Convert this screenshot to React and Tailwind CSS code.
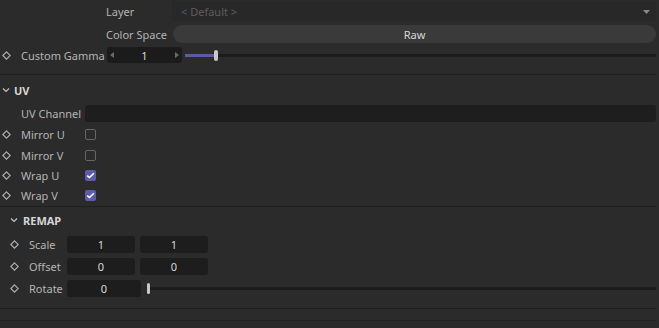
import React from "react";

const font = { fontFamily: '"Noto Sans", "Open Sans", sans-serif' };

function Diamond() {
  return (
    <svg width="9" height="9" viewBox="0 0 9 9" className="shrink-0">
      <path d="M4.5 0.8 L8.2 4.5 L4.5 8.2 L0.8 4.5 Z" fill="none" stroke="#b0b0b0" strokeWidth="1.1" />
    </svg>
  );
}

function Chevron() {
  return (
    <svg width="8" height="6" viewBox="0 0 8 6" className="shrink-0">
      <path d="M1 1.5 L4 4.5 L7 1.5" fill="none" stroke="#c8c8c8" strokeWidth="1.1" />
    </svg>
  );
}

function Checkbox({ checked }) {
  if (checked) {
    return (
      <div className="w-[11px] h-[11px] rounded-[2px] bg-[#5c5caa] flex items-center justify-center">
        <svg width="9" height="7" viewBox="0 0 9 7">
          <path d="M1.2 3.6 L3.5 5.6 L7.8 1.3" fill="none" stroke="#ffffff" strokeWidth="1.5" />
        </svg>
      </div>
    );
  }
  return <div className="w-[11px] h-[11px] rounded-[2px] border border-[#666666] bg-[#2b2b2b]" />;
}

function CheckRow({ label, checked, cls = "" }) {
  return (
    <div className={"flex items-center h-[20px] " + cls}>
      <div className="w-[21px] pl-[2px] flex items-center"><Diamond /></div>
      <div className="w-[64px] text-[#b4b4b4]">{label}</div>
      <Checkbox checked={checked} />
    </div>
  );
}

function NumField({ value, w }) {
  return (
    <div className={"h-[17px] rounded-[3px] bg-[#1d1d1d] flex items-center justify-center text-[#d8d8d8] " + w}>
      {value}
    </div>
  );
}

export default function App() {
  return (
    <div className="w-[659px] h-[328px] bg-[#2b2b2b] text-[11px] leading-none overflow-hidden" style={font}>
      <div className="w-[656px] pt-[1px]">
        {/* Layer */}
        <div className="flex items-center h-[21px]">
          <div className="w-[172px] pl-[106px] text-[#b4b4b4]">Layer</div>
          <div className="flex-1 h-[21px] rounded-[3px] bg-[#282828] flex items-center pl-[9px] pr-[6px] text-[#5c5c5c]">
            <span className="flex-1">&lt; Default &gt;</span>
            <svg width="7" height="4" viewBox="0 0 7 4"><path d="M0 0 L7 0 L3.5 4 Z" fill="#8a8a8a" /></svg>
          </div>
        </div>
        {/* Color space */}
        <div className="flex items-center h-[18px] mt-[3px]">
          <div className="w-[173px] pl-[106px] text-[#b4b4b4] whitespace-nowrap">Color Space</div>
          <div className="flex-1 h-[18px] rounded-full bg-[#3a3a3a] flex items-center justify-center text-[#d8d8d8]">Raw</div>
        </div>
        {/* Custom Gamma */}
        <div className="flex items-center h-[16px] mt-[4px]">
          <div className="w-[21px] pl-[2px] flex items-center"><Diamond /></div>
          <div className="w-[86px] text-[#b4b4b4] whitespace-nowrap">Custom Gamma</div>
          <div className="w-[75px] h-[16px] rounded-[3px] bg-[#1b1b1b] flex items-center justify-between px-[3px] text-[#d8d8d8]">
            <svg width="4" height="6" viewBox="0 0 4 6"><path d="M4 0 L0 3 L4 6 Z" fill="#6a6a6a" /></svg>
            <span>1</span>
            <svg width="4" height="6" viewBox="0 0 4 6"><path d="M0 0 L4 3 L0 6 Z" fill="#6a6a6a" /></svg>
          </div>
          <div className="flex-1 flex items-center ml-[3px] h-[12px]">
            <div className="w-[29px] h-[3px] bg-[#5a5aa6]" />
            <div className="w-[4px] h-[11px] rounded-[2px] bg-[#c8c8c8]" />
            <div className="flex-1 h-[3px] bg-[#1c1c1c]" />
          </div>
        </div>
        <div className="h-[11px]" />
        <div className="h-[1px] bg-[#1f1f1f]" />
        {/* UV header */}
        <div className="flex items-center h-[30px] pl-[2px] gap-[4px]">
          <Chevron />
          <span className="font-bold text-[#d6d6d6] text-[11px]">UV</span>
        </div>
        {/* UV Channel */}
        <div className="flex items-center h-[17px]">
          <div className="w-[85px] pl-[21px] text-[#b4b4b4] whitespace-nowrap">UV Channel</div>
          <div className="flex-1 h-[17px] rounded-[3px] bg-[#1e1e1e]" />
        </div>
        <div className="h-[2px]" />
        <CheckRow label="Mirror U" checked={false} />
        <CheckRow label="Mirror V" checked={false} cls="mt-[1px]" />
        <CheckRow label="Wrap U" checked={true} />
        <CheckRow label="Wrap V" checked={true} />
        <div className="h-[1px]" />
        <div className="h-[1px] bg-[#1f1f1f]" />
        {/* REMAP */}
        <div className="pl-[8px]">
          <div className="flex items-center h-[26px] pl-[2px] gap-[5px]">
            <Chevron />
            <span className="font-bold text-[#d6d6d6] text-[11px]">REMAP</span>
          </div>
          <div className="flex flex-col gap-[5px] mt-[3px]">
            <div className="flex items-center h-[17px]">
              <div className="w-[21px] pl-[2px] flex items-center"><Diamond /></div>
              <div className="w-[38px] text-[#b4b4b4]">Scale</div>
              <NumField value="1" w="w-[68px]" />
              <div className="w-[5px]" />
              <NumField value="1" w="w-[68px]" />
            </div>
            <div className="flex items-center h-[17px]">
              <div className="w-[21px] pl-[2px] flex items-center"><Diamond /></div>
              <div className="w-[38px] text-[#b4b4b4]">Offset</div>
              <NumField value="0" w="w-[68px]" />
              <div className="w-[5px]" />
              <NumField value="0" w="w-[68px]" />
            </div>
            <div className="flex items-center h-[17px]">
              <div className="w-[21px] pl-[2px] flex items-center"><Diamond /></div>
              <div className="w-[38px] text-[#b4b4b4]">Rotate</div>
              <NumField value="0" w="w-[74px]" />
              <div className="flex-1 flex items-center ml-[6px] h-[12px]">
                <div className="w-[3px] h-[11px] rounded-[2px] bg-[#c8c8c8]" />
                <div className="flex-1 h-[3px] bg-[#1c1c1c]" />
              </div>
            </div>
          </div>
        </div>
        <div className="h-[11px]" />
        <div className="h-[1px] bg-[#1f1f1f]" />
        <div className="h-[11px]" />
        <div className="h-[1px] bg-[#232323]" />
      </div>
    </div>
  );
}
